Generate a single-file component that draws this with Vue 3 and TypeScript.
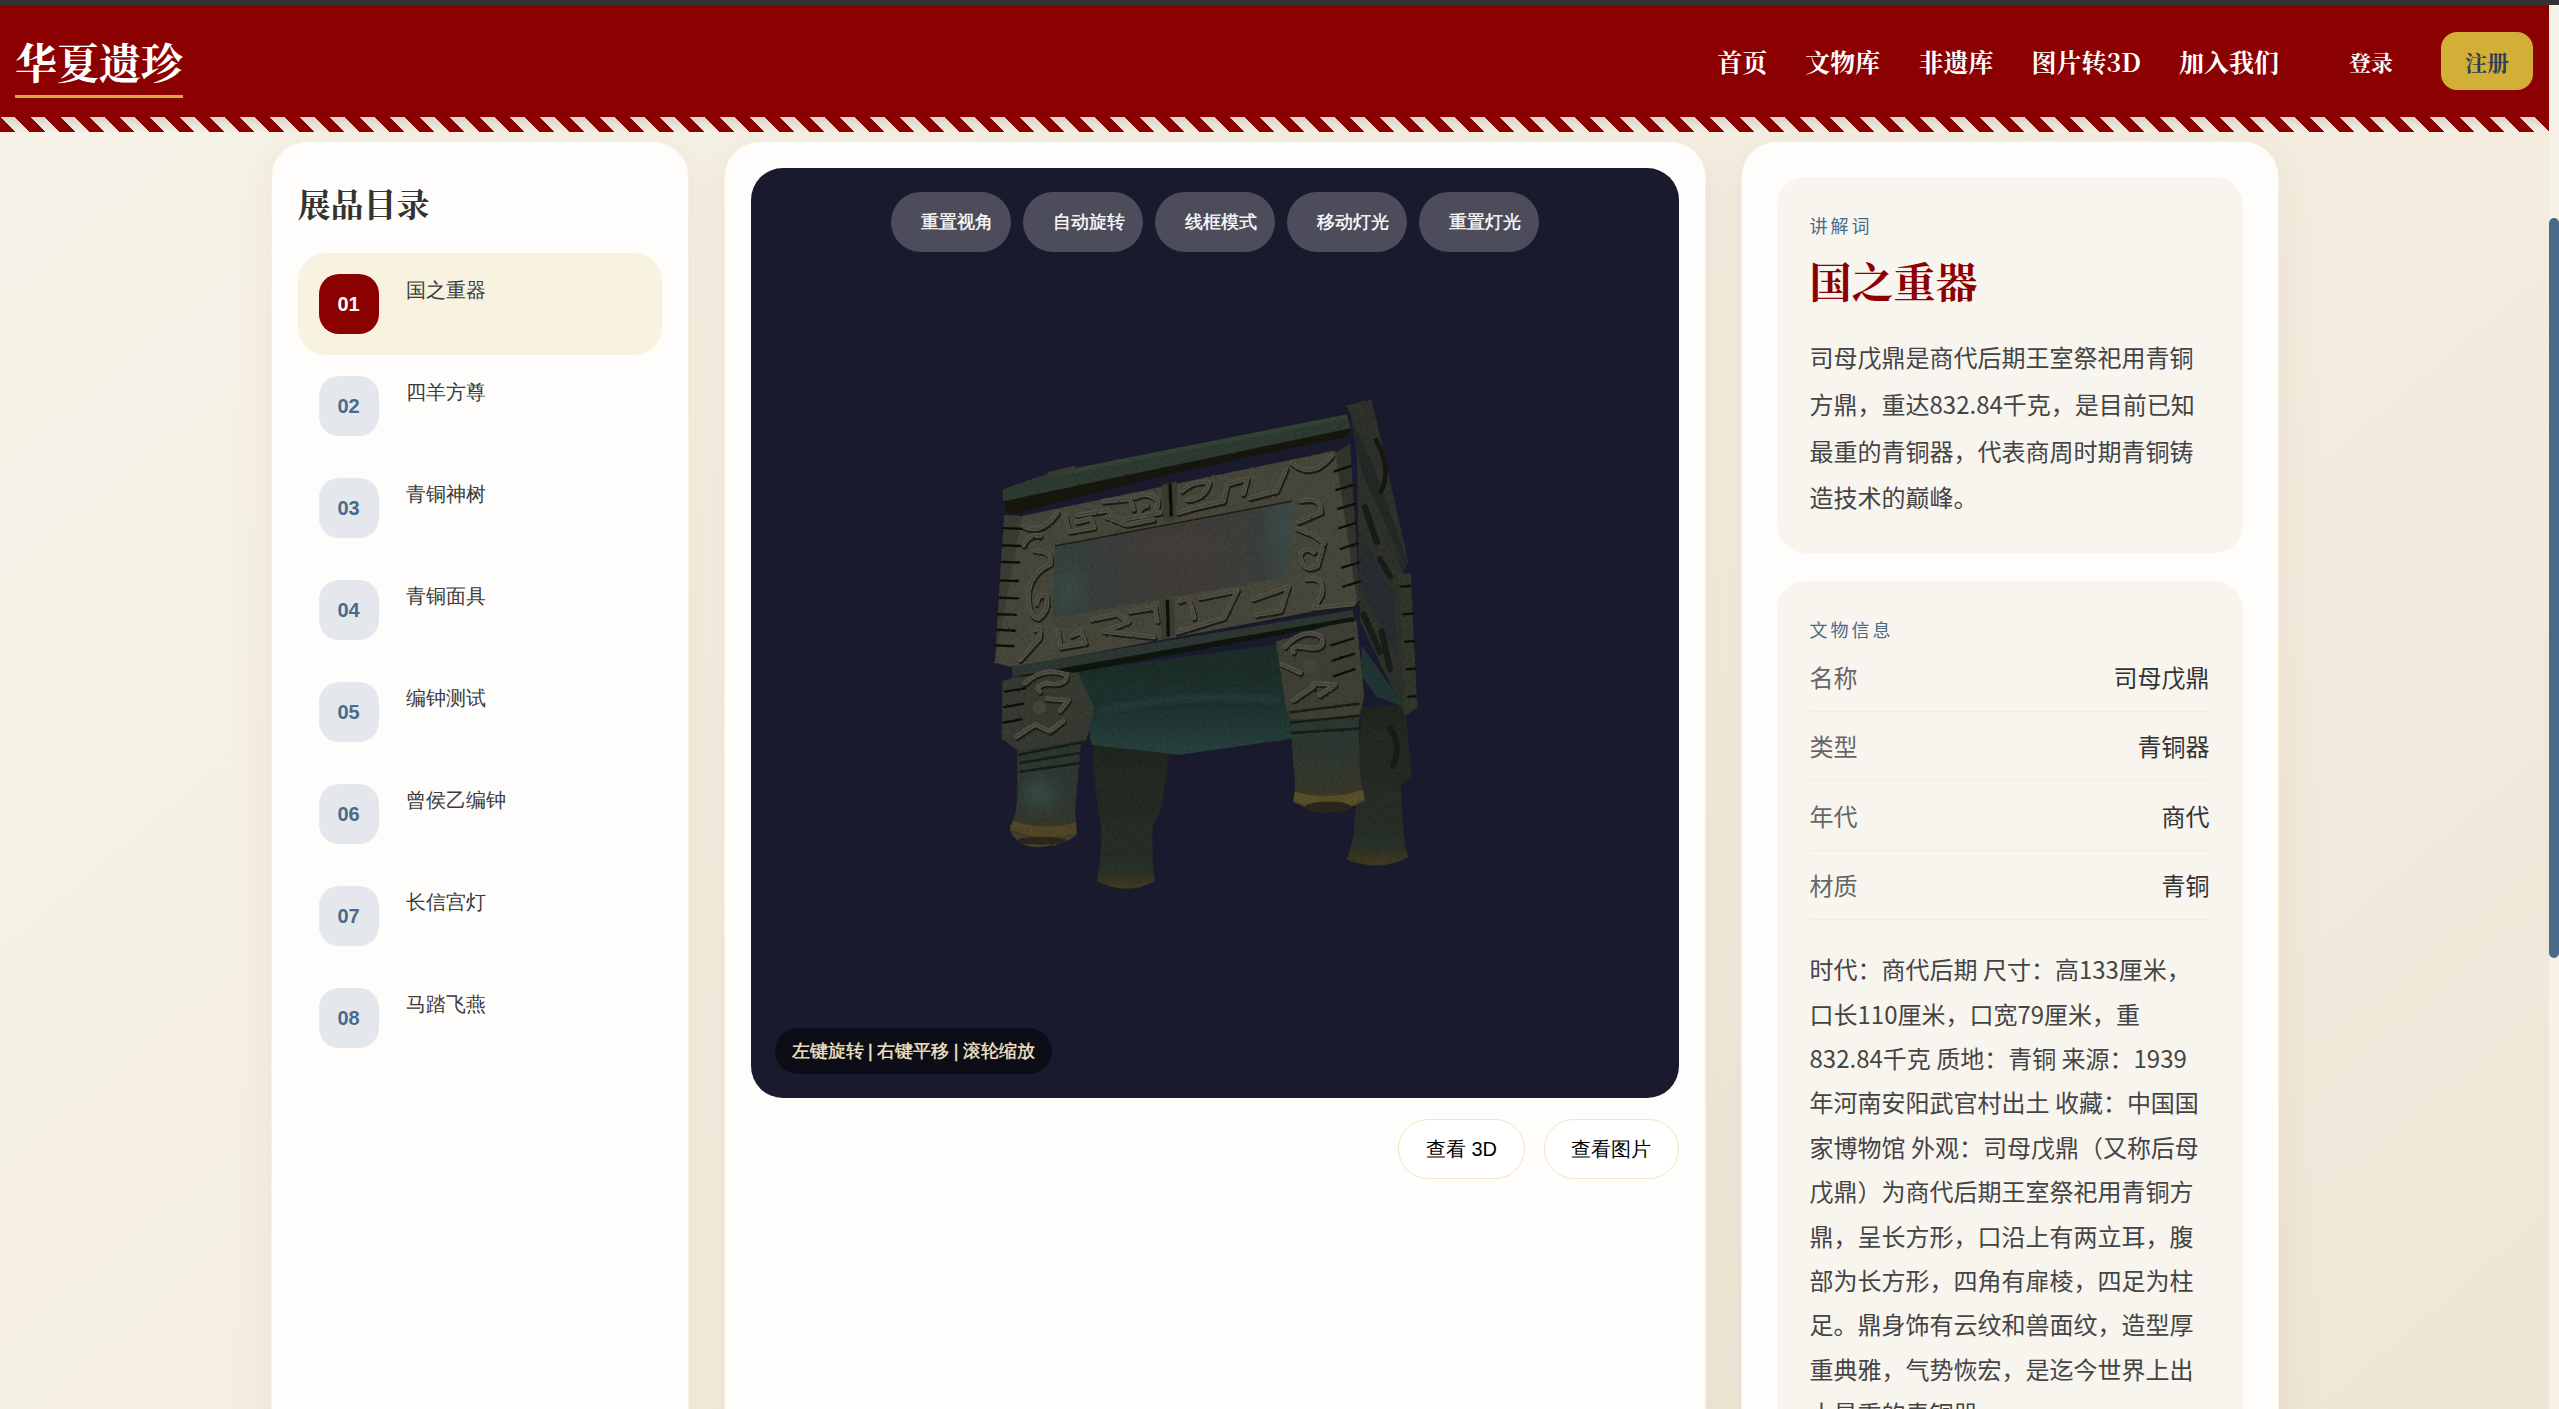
<script setup lang="ts">
interface Exhibit { no: string; name: string }
const exhibits: Exhibit[] = [
  { no: '01', name: '国之重器' },
  { no: '02', name: '四羊方尊' },
  { no: '03', name: '青铜神树' },
  { no: '04', name: '青铜面具' },
  { no: '05', name: '编钟测试' },
  { no: '06', name: '曾侯乙编钟' },
  { no: '07', name: '长信宫灯' },
  { no: '08', name: '马踏飞燕' },
]
const navLinks: string[] = ['首页', '文物库', '非遗库', '图片转3D', '加入我们']
const controls: string[] = ['重置视角', '自动旋转', '线框模式', '移动灯光', '重置灯光']
const facts: [string, string][] = [
  ['名称', '司母戊鼎'],
  ['类型', '青铜器'],
  ['年代', '商代'],
  ['材质', '青铜'],
]
const intro: string = '司母戊鼎是商代后期王室祭祀用青铜方鼎\uFF0C重达832.84千克\uFF0C是目前已知最重的青铜器\uFF0C代表商周时期青铜铸造技术的巅峰。'
const description: string = '时代\uFF1A商代后期 尺寸\uFF1A高133厘米\uFF0C口长110厘米\uFF0C口宽79厘米\uFF0C重832.84千克 质地\uFF1A青铜 来源\uFF1A1939年河南安阳武官村出土 收藏\uFF1A中国国家博物馆 外观\uFF1A司母戊鼎\uFF08又称后母戊鼎\uFF09为商代后期王室祭祀用青铜方鼎\uFF0C呈长方形\uFF0C口沿上有两立耳\uFF0C腹部为长方形\uFF0C四角有扉棱\uFF0C四足为柱足。鼎身饰有云纹和兽面纹\uFF0C造型厚重典雅\uFF0C气势恢宏\uFF0C是迄今世界上出土最重的青铜器。'
const scrolls: string[] = [
  'M315 395 L328 440 L402 428 L392 402 L350 412',
  'M352 392 L442 378 L470 408 L600 385',
  'M440 398 L500 420 L580 405',
  'M430 352 L510 345 L520 375',
  'M525 340 Q560 322 592 348 Q602 388 545 396 Q525 375 560 365',
  'M665 322 Q705 288 748 298 Q735 345 682 348',
  'M655 385 L700 372 L790 352 L802 302 L862 286 L850 330',
  'M870 342 L950 322 L978 258',
  'M995 240 Q1055 290 1115 220',
  'M190 425 Q245 450 292 385',
  'M190 480 Q205 445 240 452',
  'M225 495 Q282 498 270 535 Q212 560 205 620 Q205 690 235 692 Q272 665 258 625 Q232 620 230 650',
  'M225 725 Q245 705 238 750 L180 812',
  'M1022 350 Q1088 338 1082 385 L1015 412',
  'M1012 432 L1060 450 L1092 472 L1072 540 Q1030 562 1020 510 Q1032 480 1062 500',
  'M1040 578 Q1095 568 1085 622 L1062 662 L1180 650',
  'M292 728 L302 776 L376 764 L362 728 L335 742',
  'M395 695 L470 680 L505 702 L432 730 L582 746',
  'M510 672 L585 660 L592 700',
  'M660 642 Q690 618 702 690',
  'M720 632 L832 610 L792 690 L652 732',
  'M880 636 L985 600 L962 670 L890 682',
  'M975 775 Q1030 715 1085 745 Q1100 790 1030 775 Q990 770 1000 790',
  'M965 825 L1020 850 M1060 880 L1125 885 L1080 915',
  'M1000 930 L1060 890',
  'M195 880 Q250 830 320 855 Q320 890 260 880 Q220 890 240 905',
  'M260 925 L325 930 L300 960',
  'M170 1035 L225 1000 L270 1020 L310 990',
]
const sideScrolls: string[] = [
  'M1215 370 L1250 470 M1260 520 L1290 570',
  'M1210 680 L1260 790 M1265 730 L1290 840',
  'M1290 1010 Q1325 1060 1300 1120',
]
const teeth: string[] = [
  'M132 430 L185 432','M128 480 L182 482','M125 528 L178 530','M121 582 L174 584','M118 632 L172 634','M114 680 L168 682','M110 725 L165 728','M108 770 L160 773',
  'M1124 265 L1172 250','M1128 320 L1178 305','M1132 375 L1183 360','M1138 430 L1188 415','M1142 490 L1192 475','M1146 545 L1196 530','M1150 600 L1200 585',
  'M1115 770 L1180 750','M1118 815 L1182 795','M1122 860 L1184 840',
  'M135 905 L195 895','M132 950 L190 940','M130 995 L185 985',
  'M1322 600 L1352 598','M1330 680 L1358 678','M1336 760 L1362 758','M1340 840 L1366 838','M1344 920 L1368 918',
]
</script>

<template>
  <div class="screen">
    <div class="window-edge"></div>
    <div class="shell">
      <div class="page">
        <header class="masthead">
          <div class="topbar">
            <a class="logo">华夏遗珍</a>
            <nav class="nav">
              <a v-for="link in navLinks" :key="link">{{ link }}</a>
            </nav>
            <div class="auth">
              <button class="login">登录</button>
              <button class="signup">注册</button>
            </div>
          </div>
          <div class="stripes"></div>
        </header>

        <main class="columns">
          <aside class="card catalog">
            <h2>展品目录</h2>
            <ul>
              <li v-for="(item, i) in exhibits" :key="item.no" :class="{ active: i === 0 }">
                <span class="badge">{{ item.no }}</span>
                <span class="item-name">{{ item.name }}</span>
              </li>
            </ul>
          </aside>

          <section class="card stage">
            <div class="viewer">
              <div class="controls">
                <button v-for="c in controls" :key="c">{{ c }}</button>
              </div>
              <svg class="ding" viewBox="0 0 1440 1568" preserveAspectRatio="none">
                <defs>
                  <filter id="bronze" x="-3%" y="-3%" width="106%" height="106%">
                    <feTurbulence type="fractalNoise" baseFrequency="0.11" numOctaves="2" seed="7" result="noise" />
                    <feDisplacementMap in="SourceGraphic" in2="noise" scale="6" xChannelSelector="R" yChannelSelector="G" result="shape" />
                    <feColorMatrix in="noise" type="matrix" values="0.32 0.32 0 0 0.62  0.32 0.32 0 0 0.62  0.32 0.32 0 0 0.62  0 0 0 0 1" result="grey" />
                    <feComposite in="shape" in2="grey" operator="arithmetic" k1="1" k2="0" k3="0" k4="0" />
                  </filter>
                  <filter id="soft" x="-40%" y="-40%" width="180%" height="180%"><feGaussianBlur stdDeviation="26" /></filter>
                  <filter id="soft2" x="-30%" y="-30%" width="160%" height="160%"><feGaussianBlur stdDeviation="6" /></filter>
                  <linearGradient id="panel" x1="0" y1="0" x2="1" y2="0">
                    <stop offset="0" stop-color="#35423f" />
                    <stop offset="0.2" stop-color="#3a3f3c" />
                    <stop offset="0.55" stop-color="#423b38" />
                    <stop offset="0.85" stop-color="#3b403c" />
                    <stop offset="1" stop-color="#3c4945" />
                  </linearGradient>
                  <linearGradient id="belly" x1="0" y1="0" x2="0" y2="1">
                    <stop offset="0" stop-color="#1c2c28" />
                    <stop offset="0.55" stop-color="#1e322e" />
                    <stop offset="1" stop-color="#27423f" />
                  </linearGradient>
                  <linearGradient id="foot" x1="0" y1="0" x2="0" y2="1">
                    <stop offset="0" stop-color="#2a3430" />
                    <stop offset="0.7" stop-color="#2e3833" />
                    <stop offset="0.9" stop-color="#38382a" />
                    <stop offset="1" stop-color="#544c28" />
                  </linearGradient>
                  <linearGradient id="footBack" x1="0" y1="0" x2="0" y2="1">
                    <stop offset="0" stop-color="#1f271e" />
                    <stop offset="0.86" stop-color="#283029" />
                    <stop offset="1" stop-color="#423b20" />
                  </linearGradient>
                </defs>
                <g filter="url(#bronze)">
                  <path d="M1205 950 L1335 945 L1355 1150 L1322 1175 L1330 1310 Q1335 1360 1345 1385 Q1260 1430 1160 1392 Q1185 1330 1185 1270 L1192 1200 Z" fill="url(#footBack)" />
                  <path d="M1190 190 L1330 560 L1372 950 L1336 975 L1200 700 Z" fill="#2e322a" />
                  <path d="M1200 440 L1300 620 L1312 800 L1205 620 Z" fill="#252f32" />
                  <path d="M1205 770 L1335 950 L1250 920 L1205 860 Z" fill="#223636" />
                  <path d="M1315 565 L1352 560 L1372 950 L1336 975 Z" fill="#32372c" />

                  <path d="M398 1060 L628 1085 L605 1240 L578 1300 Q575 1400 585 1455 Q500 1500 410 1455 Q428 1380 422 1285 L405 1180 Z" fill="url(#footBack)" />
                  <path d="M352 845 L950 768 L1005 1040 L660 1088 L395 1060 Z" fill="url(#belly)" />
                  <path d="M420 960 Q700 900 960 930" stroke="#38524f" stroke-width="20" fill="none" opacity=".3" filter="url(#soft2)" />

                  <path d="M948 760 L1110 712 L1190 700 L1212 920 L1196 990 L1200 1150 Q1208 1190 1215 1222 Q1110 1278 1000 1225 Q1010 1190 1000 1120 L992 985 L978 950 Z" fill="url(#foot)" />
                  <path d="M948 760 L1110 712 L1190 700 L1212 920 L1196 980 L992 985 L978 950 Z" fill="#3f4034" />
                  <path d="M988 965 L1198 940 M990 995 L1198 975 M992 1025 L1198 1012" stroke="#161a16" stroke-width="7" fill="none" />
                  <path d="M1000 1222 Q1110 1272 1213 1218 L1208 1190 Q1105 1225 1004 1195 Z" fill="#5a4f2a" />
                  <ellipse cx="1105" cy="1240" rx="70" ry="16" fill="#2c281d" />
                  <circle cx="1050" cy="830" r="22" fill="#45463a" />

                  <path d="M128 875 L195 850 L320 838 L352 845 L402 950 L380 1042 L362 1060 L345 1250 L350 1320 Q310 1358 215 1355 Q165 1345 150 1308 Q170 1260 172 1210 L172 1075 L125 1040 Z" fill="url(#foot)" />
                  <path d="M128 875 L195 850 L320 838 L352 845 L402 950 L380 1042 L172 1075 L125 1040 Z" fill="#383a30" />
                  <path d="M175 1088 L368 1052 M178 1112 L366 1082 M178 1138 L362 1112" stroke="#161a17" stroke-width="7" fill="none" />
                  <ellipse cx="240" cy="1200" rx="44" ry="38" fill="#42625b" opacity=".6" filter="url(#soft)" />
                  <path d="M150 1305 Q245 1345 350 1316 L348 1285 Q250 1310 158 1280 Z" fill="#524726" />
                  <ellipse cx="245" cy="1338" rx="75" ry="12" fill="#2c281d" />
                  <circle cx="238" cy="950" r="20" fill="#45463a" />

                  <path d="M1120 215 L1170 185 L1200 640 L1135 665 Z" fill="#33352b" />
                  <path d="M132 392 L188 395 L160 825 L104 822 Z" fill="#3a3c31" />
                  <path d="M185 395 L1125 205 L1192 648 L158 835 L104 820 Z" fill="#46463a" />
                  <path d="M285 482 L995 352 L992 570 L278 692 Z" fill="url(#panel)" />
                  <ellipse cx="330" cy="610" rx="40" ry="60" fill="#3f5653" opacity=".45" filter="url(#soft)" />
                  <ellipse cx="960" cy="430" rx="28" ry="46" fill="#445c58" opacity=".4" filter="url(#soft)" />
                  <ellipse cx="660" cy="480" rx="170" ry="26" fill="#524643" opacity=".35" filter="url(#soft)" />
                  <path d="M285 482 L995 352" stroke="#1d1e17" stroke-width="4" fill="none" />

                  <path d="M155 832 L1178 668 L1182 692 L160 868 Z" fill="#2f3730" />
                  <path d="M160 862 L1180 688 L1180 700 L340 850 Z" fill="#0f120c" />

                  <path d="M132 345 L1172 138 L1165 165 Q700 250 150 392 Q130 375 132 345 Z" fill="#12140d" />
                  <path d="M128 318 L262 272 L1160 100 L1172 140 L130 352 Z" fill="#2e3a33" />
                  <path d="M262 272 L1160 100 L1164 112 L270 284 Z" fill="#354239" />
                  <path d="M262 268 L345 248 L350 262 L270 280 Z" fill="#3a3b2e" />

                  <path d="M1158 75 L1235 55 L1345 530 L1332 552 L1200 260 L1172 100 Z" fill="#2f3229" />
                  <path d="M1172 105 L1205 265 L1335 545 L1342 525 L1240 250 Z" fill="#212c28" />
                  <path d="M1245 170 Q1300 260 1260 330" stroke="#15180f" stroke-width="14" fill="none" />

                  <g fill="none" stroke-linecap="round" stroke-linejoin="round">
                    <path v-for="(d, i) in sideScrolls" :key="'z' + i" :d="d" stroke="#191b14" stroke-width="18" />
                    <path v-for="(d, i) in scrolls" :key="'s' + i" :d="d" stroke="#1d1e16" stroke-width="16" transform="translate(3 5)" />
                    <path v-for="(d, i) in scrolls" :key="'l' + i" :d="d" stroke="#535348" stroke-width="14" />
                    <path v-for="(d, i) in scrolls" :key="'m' + i" :d="d" stroke="#44443a" stroke-width="4" />
                    <path v-for="(d, i) in teeth" :key="'t' + i" :d="d" stroke="#0f110b" stroke-width="7" />
                  </g>
                  <path d="M605 305 L650 295 L652 395 Q625 425 610 405 Z" fill="#3b3c30" />
                  <path d="M630 300 L634 398" stroke="#0f100b" stroke-width="10" />
                  <path d="M600 642 L642 634 L645 740 Q620 755 604 752 Z" fill="#3b3c30" />
                  <path d="M622 638 L625 745" stroke="#0f100b" stroke-width="10" />
                </g>
              </svg>
              <div class="hint">左键旋转 | 右键平移 | 滚轮缩放</div>
            </div>
            <div class="view-switch">
              <button>查看 3D</button>
              <button>查看图片</button>
            </div>
          </section>

          <aside class="card details">
            <section class="panel">
              <div class="eyebrow">讲解词</div>
              <h1>国之重器</h1>
              <p>{{ intro }}</p>
            </section>
            <section class="panel info">
              <div class="eyebrow">文物信息</div>
              <dl>
                <div v-for="[k, v] in facts" :key="k" class="fact">
                  <dt>{{ k }}</dt>
                  <dd>{{ v }}</dd>
                </div>
              </dl>
              <p>{{ description }}</p>
            </section>
          </aside>
        </main>
      </div>
      <div class="rail"><div class="thumb"></div></div>
    </div>
  </div>
</template>

<style>
html, body { margin: 0; height: 100%; overflow: hidden; }
</style>

<style scoped>
.screen { height: 100vh; display: flex; flex-direction: column; overflow: hidden; background: #f6f2e7; }
.window-edge { height: 5px; flex: none; background: #333; }
.shell { flex: 1; min-height: 0; display: flex; }
.page {
  flex: 1; min-width: 0; overflow: hidden;
  background: linear-gradient(140deg, #f7f3e8 0%, #f4eee1 55%, #eee5d6 100%);
  font-family: "Noto Sans CJK SC", sans-serif;
}
.rail { width: 10px; flex: none; background: #f6f2e8; }
.thumb { width: 10px; height: 740px; margin-top: 213px; background: #4a6a8a; border-radius: 5px; }

.topbar {
  height: 112px; box-sizing: border-box; padding: 0 16px 0 15px; display: flex; align-items: center;
  background: #8b0000; color: #fff;
  font-family: "Noto Serif CJK SC", "Liberation Serif", serif;
}
.logo {
  font-size: 42px; font-weight: 700; line-height: 56px; margin-right: auto;
  border-bottom: 3px solid #d4af37; padding-bottom: 6px; margin-top: 8px;
}
.nav { display: flex; gap: 38px; font-size: 25px; font-weight: 700; }
.auth { display: flex; align-items: center; gap: 24px; margin-left: 46px; }
.auth button {
  height: 58px; padding: 0 24px; border: 0; border-radius: 16px; font: inherit; font-size: 22px; font-weight: 700;
}
.login { background: transparent; color: #fff; }
.signup { background: #d4af37; color: #2c3e50; }
.stripes {
  height: 15px;
  background:
    repeating-linear-gradient(45deg, #8b0000 0 10.607px, transparent 10.607px 21.213px),
    linear-gradient(180deg, #d9d6cd, #f5f0e4);
}

.columns {
  width: 2008px; margin: 9px auto 0; display: grid; grid-template-columns: 418px 982px 538px; gap: 35px;
}
.card {
  height: 1400px; box-sizing: border-box; background: #fffdfb; border-radius: 36px;
  box-shadow: 0 8px 44px rgba(140, 105, 50, 0.1); border: 1px solid #f8f0dc; border-bottom: 0;
}

.catalog { padding: 0 26px; }
.catalog h2 {
  margin: 35px 0 24px; font-size: 33px; line-height: 52px; font-weight: 700; color: #333;
  font-family: "Noto Serif CJK SC", "Liberation Serif", serif;
}
.catalog ul { list-style: none; margin: 0; padding: 0; }
.catalog li { height: 102px; box-sizing: border-box; padding: 21px; display: flex; gap: 27px; border-radius: 27px; }
.catalog li.active { background: #f8f2e0; }
.badge {
  width: 60px; height: 60px; flex: none; display: flex; align-items: center; justify-content: center;
  border-radius: 20px; background: #e4e8ec; color: #4a6a8a;
  font: 700 20px "Liberation Sans", sans-serif;
}
.active .badge { background: #8b0000; color: #fff; }
.item-name { font: 20px/32px "Liberation Sans", sans-serif; color: #3a3a3a; }

.stage { padding: 26px 26px 0; }
.viewer { position: relative; height: 930px; background: #1a1a2e; border-radius: 32px; overflow: hidden; }
.controls { position: absolute; top: 24px; left: 0; right: 0; display: flex; justify-content: center; gap: 12px; }
.controls button {
  width: 120px; height: 60px; padding: 0 18px 0 30px; box-sizing: border-box; text-align: left; white-space: nowrap;
  border: 0; border-radius: 30px; background: rgba(255, 255, 255, 0.22); color: #fff;
  font: 18px "Liberation Sans", sans-serif; -webkit-text-stroke: 0.35px #fff;
}
.ding { position: absolute; left: 209px; top: 212px; width: 480px; height: 540px; }
.hint {
  position: absolute; left: 24px; bottom: 24px; height: 46px; padding: 0 17px; display: flex; align-items: center;
  border-radius: 23px; background: rgba(0, 0, 0, 0.5); color: #f5e6c8; word-spacing: -0.5px;
  font: 18px "Liberation Sans", sans-serif; -webkit-text-stroke: 0.35px #f5e6c8;
}
.view-switch { display: flex; justify-content: flex-end; gap: 19px; margin-top: 21px; }
.view-switch button {
  height: 60px; padding: 0 26.5px; border: 1.5px solid #f3e5c3; border-radius: 30px; background: #fff; color: #000;
  font: 20px "Liberation Sans", sans-serif;
}

.details { padding: 35px 35px 0; display: flex; flex-direction: column; gap: 28px; }
.panel { background: #f8f5ef; border-radius: 28px; padding: 0 33px 32px; color: #444; }
.eyebrow { font-size: 18px; line-height: 30px; letter-spacing: 3px; color: #4a6a8a; padding-top: 33px; }
.panel h1 {
  margin: 11px 0 24px; font-size: 42px; line-height: 59px; font-weight: 700; color: #8b0000;
  font-family: "Noto Serif CJK SC", "Liberation Serif", serif;
}
.panel p { margin: 0; font-size: 24px; line-height: 46.8px; }
.info dl { margin: -2px 0 0; }
.fact {
  height: 69.5px; box-sizing: border-box; display: flex; justify-content: space-between; align-items: center;
  border-bottom: 1.5px solid #f3ecd8; font-size: 24px;
}
.fact dt { color: #666; }
.fact dd { margin: 0; color: #333; }
.info p { margin-top: 27px; line-height: 44.4px; }
</style>
